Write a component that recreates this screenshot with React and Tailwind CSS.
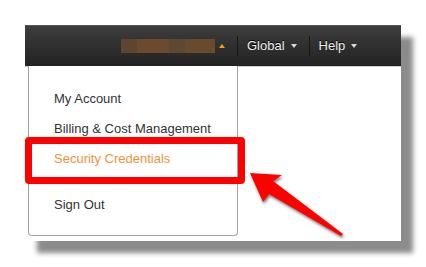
export default function App() {
    const blur = ["#5f4530", "#6b4a2e", "#5d4834", "#6a4a2e", "#684a2d"];
    const widths = [16, 32, 16, 15, 15];

    return (
        <div className="min-h-[267px] w-[426px] bg-white pt-[25px] pl-[25px]" style={{ fontFamily: '"Liberation Sans", Arial, sans-serif' }}>
            <div className="relative h-[216px] w-[376px] bg-white shadow-[12px_12px_5px_#8b8b8b]">
                {/* console header */}
                <div className="flex h-[41px] items-center border-t border-[#555] bg-gradient-to-b from-[#3d3d3d] to-[#232323] pl-[96px] text-[13px] text-[#eeeeee] [text-shadow:0_-1px_0_#000]">
                    <div className="flex h-[14px]">
                        {blur.map((c, i) => (
                            <div key={i} className="h-full" style={{ background: c, width: widths[i] }} />
                        ))}
                    </div>
                    <div className="ml-[4px] h-0 w-0 border-x-[3.5px] border-b-[4px] border-x-transparent border-b-[#ff9900]" />
                    <div className="ml-[12px] h-[20px] w-px bg-[#181818]" />
                    <span className="ml-[9px]">Global</span>
                    <div className="ml-[6px] h-0 w-0 border-x-[3.5px] border-t-[4px] border-x-transparent border-t-[#d8d8d8]" />
                    <div className="ml-[12px] h-[20px] w-px bg-[#181818]" />
                    <span className="ml-[9px]">Help</span>
                    <div className="ml-[6px] h-0 w-0 border-x-[3.5px] border-t-[4px] border-x-transparent border-t-[#d8d8d8]" />
                </div>
                <div className="h-px bg-[#cfcfcf]" />

                {/* dropdown */}
                <div className="absolute top-[41px] left-[3px] h-[170px] w-[210px] rounded-b-[4px] border-x border-b border-[#a3a3a3] bg-white pt-[18px] text-[13px] text-[#333]">
                    <div className="flex h-[30px] items-center pl-[25px]">My Account</div>
                    <div className="flex h-[30px] items-center pl-[25px]">Billing &amp; Cost Management</div>
                    <div className="flex h-[30px] items-center pl-[25px] text-[#f0923a]">Security Credentials</div>
                    <div className="mt-[16px] flex h-[30px] items-center pl-[25px]">Sign Out</div>
                </div>

                {/* annotation */}
                <div className="absolute top-[112px] left-0 h-[47px] w-[220px] rounded-[4px] border-[7px] border-[#ff0000]" />
                <svg className="absolute inset-0 drop-shadow-[1px_2px_1.5px_rgba(0,0,0,0.55)]" width="376" height="216" viewBox="0 0 376 216">
                    <polygon points="225,148 257,150 248,156 318,209 316,211 244,169 238,177" fill="#ff0000" />
                </svg>
            </div>
        </div>
    );
}
